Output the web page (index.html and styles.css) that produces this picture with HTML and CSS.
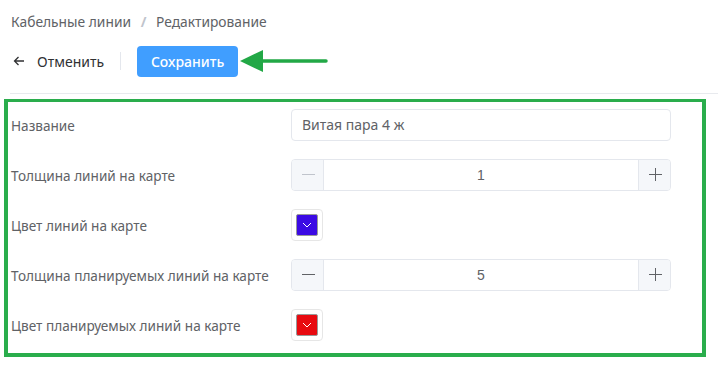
FILE: index.html
```html
<!DOCTYPE html>
<html>
<head>
    <meta charset="UTF-8">
    <title>Редактирование</title>
    <link rel="stylesheet" href="styles.css">
</head>
<body>
    <div class="page">
        <div class="breadcrumb">
            <span>Кабельные линии</span>
            <span class="slash">/</span>
            <span>Редактирование</span>
        </div>

        <div class="toolbar">
            <a href="javascript:;" class="back">
                <svg width="12" height="10" viewBox="0 0 12 10"><path d="M11 5H1.5M5.5 1L1.5 5l4 4" fill="none" stroke="#303133" stroke-width="1.3"/></svg>
                <span>Отменить</span>
            </a>
            <span class="sep"></span>
            <a href="javascript:;" class="btn-save">Сохранить</a>
            <!-- стрелка-указатель -->
            <svg class="pointer" width="88" height="24" viewBox="0 0 88 24"><polygon points="0,12 23,1 23,23" fill="#22a846"/><path d="M20 12H86" stroke="#22a846" stroke-width="3.5" stroke-linecap="round"/></svg>
        </div>

        <div class="divider"></div>

        <div class="form-box">
            <div class="row">
                <label>Название</label>
                <div class="input">Витая пара 4 ж</div>
            </div>
            <div class="row">
                <label>Толщина линий на карте</label>
                <div class="stepper">
                    <span class="step minus disabled"></span>
                    <span class="value">1</span>
                    <span class="step plus"></span>
                </div>
            </div>
            <div class="row">
                <label>Цвет линий на карте</label>
                <div class="picker">
                    <span class="swatch purple">
                        <svg width="10" height="6" viewBox="0 0 10 6"><path d="M1 1l4 4 4-4" fill="none" stroke="#fff" stroke-width="1"/></svg>
                    </span>
                </div>
            </div>
            <div class="row">
                <label>Толщина планируемых линий на карте</label>
                <div class="stepper">
                    <span class="step minus"></span>
                    <span class="value">5</span>
                    <span class="step plus"></span>
                </div>
            </div>
            <div class="row">
                <label>Цвет планируемых линий на карте</label>
                <div class="picker">
                    <span class="swatch red">
                        <svg width="10" height="6" viewBox="0 0 10 6"><path d="M1 1l4 4 4-4" fill="none" stroke="#fff" stroke-width="1"/></svg>
                    </span>
                </div>
            </div>
        </div>
    </div>
</body>
</html>
```

FILE: styles.css
```css
* {
    margin: 0;
    padding: 0;
    box-sizing: border-box;
}
body {
    background: #fff;
    font-family: "Noto Sans", "Open Sans", sans-serif;
    font-size: 13.6px;
    color: #606266;
}
a {
    text-decoration: none;
}
.page {
    width: 718px;
    padding-top: 12px;
}
.breadcrumb {
    padding-left: 11px;
    height: 20px;
    line-height: 20px;
    font-size: 13.8px;
    color: #606266;
}
.breadcrumb .slash {
    margin: 0 6px;
    color: #c0c4cc;
    font-weight: bold;
}

.toolbar {
    display: flex;
    align-items: center;
    height: 32px;
    margin-top: 13px;
    padding-left: 13px;
}
.back {
    display: flex;
    align-items: center;
    color: #303133;
    font-size: 14px;
}
.back svg {
    margin-right: 12px;
}
.sep {
    width: 1px;
    height: 18px;
    margin: 0 16px;
    background-color: #e4e7ed;
}
.btn-save {
    display: block;
    width: 101px;
    height: 31px;
    line-height: 31px;
    border-radius: 4px;
    background-color: #409eff;
    color: #fff;
    font-size: 14px;
    font-weight: 500;
    text-align: center;
}
.pointer {
    margin-left: 2px;
}

.divider {
    height: 1px;
    margin: 16px 0 0 10px;
    background-color: #e8eaee;
}

.form-box {
    width: 702px;
    margin: 5px 0 0 4px;
    padding: 7px 0 12px 3px;
    border: 4px solid #2aad4c;
    border-top-width: 3px;
}
.row {
    display: flex;
    align-items: center;
    height: 32px;
    margin-bottom: 18px;
}
.row:last-child {
    margin-bottom: 0;
}
.row label {
    width: 280px;
    color: #606266;
}
.input {
    width: 380px;
    height: 32px;
    line-height: 30px;
    padding-left: 10px;
    border: 1px solid #e4e7ed;
    border-radius: 4px;
    font-size: 14px;
    color: #606266;
}

.stepper {
    display: flex;
    width: 380px;
    height: 32px;
    border: 1px solid #e4e7ed;
    border-radius: 4px;
    overflow: hidden;
}
.step {
    position: relative;
    width: 32px;
    height: 30px;
    background-color: #f5f7fa;
}
.minus {
    border-right: 1px solid #e4e7ed;
}
.plus {
    border-left: 1px solid #e4e7ed;
}
.step::before,
.plus::after {
    content: "";
    position: absolute;
    left: 10px;
    top: 14px;
    width: 13px;
    height: 1px;
    background-color: #606266;
}
.plus::after {
    left: 16px;
    top: 8px;
    width: 1px;
    height: 13px;
}
.disabled::before {
    background-color: #c0c4cc;
}
.value {
    flex: 1;
    line-height: 30px;
    text-align: center;
    font-family: "Liberation Sans", Arial, sans-serif;
    font-size: 14px;
    color: #606266;
}

.picker {
    width: 32px;
    height: 32px;
    padding: 4px;
    border: 1px solid #e6e6e6;
    border-radius: 4px;
}
.swatch {
    display: flex;
    align-items: center;
    justify-content: center;
    width: 22px;
    height: 22px;
    border: 1px solid #999;
    border-radius: 2px;
}
.purple {
    background-color: #3b0ae4;
}
.red {
    background-color: #e80a10;
}
```
